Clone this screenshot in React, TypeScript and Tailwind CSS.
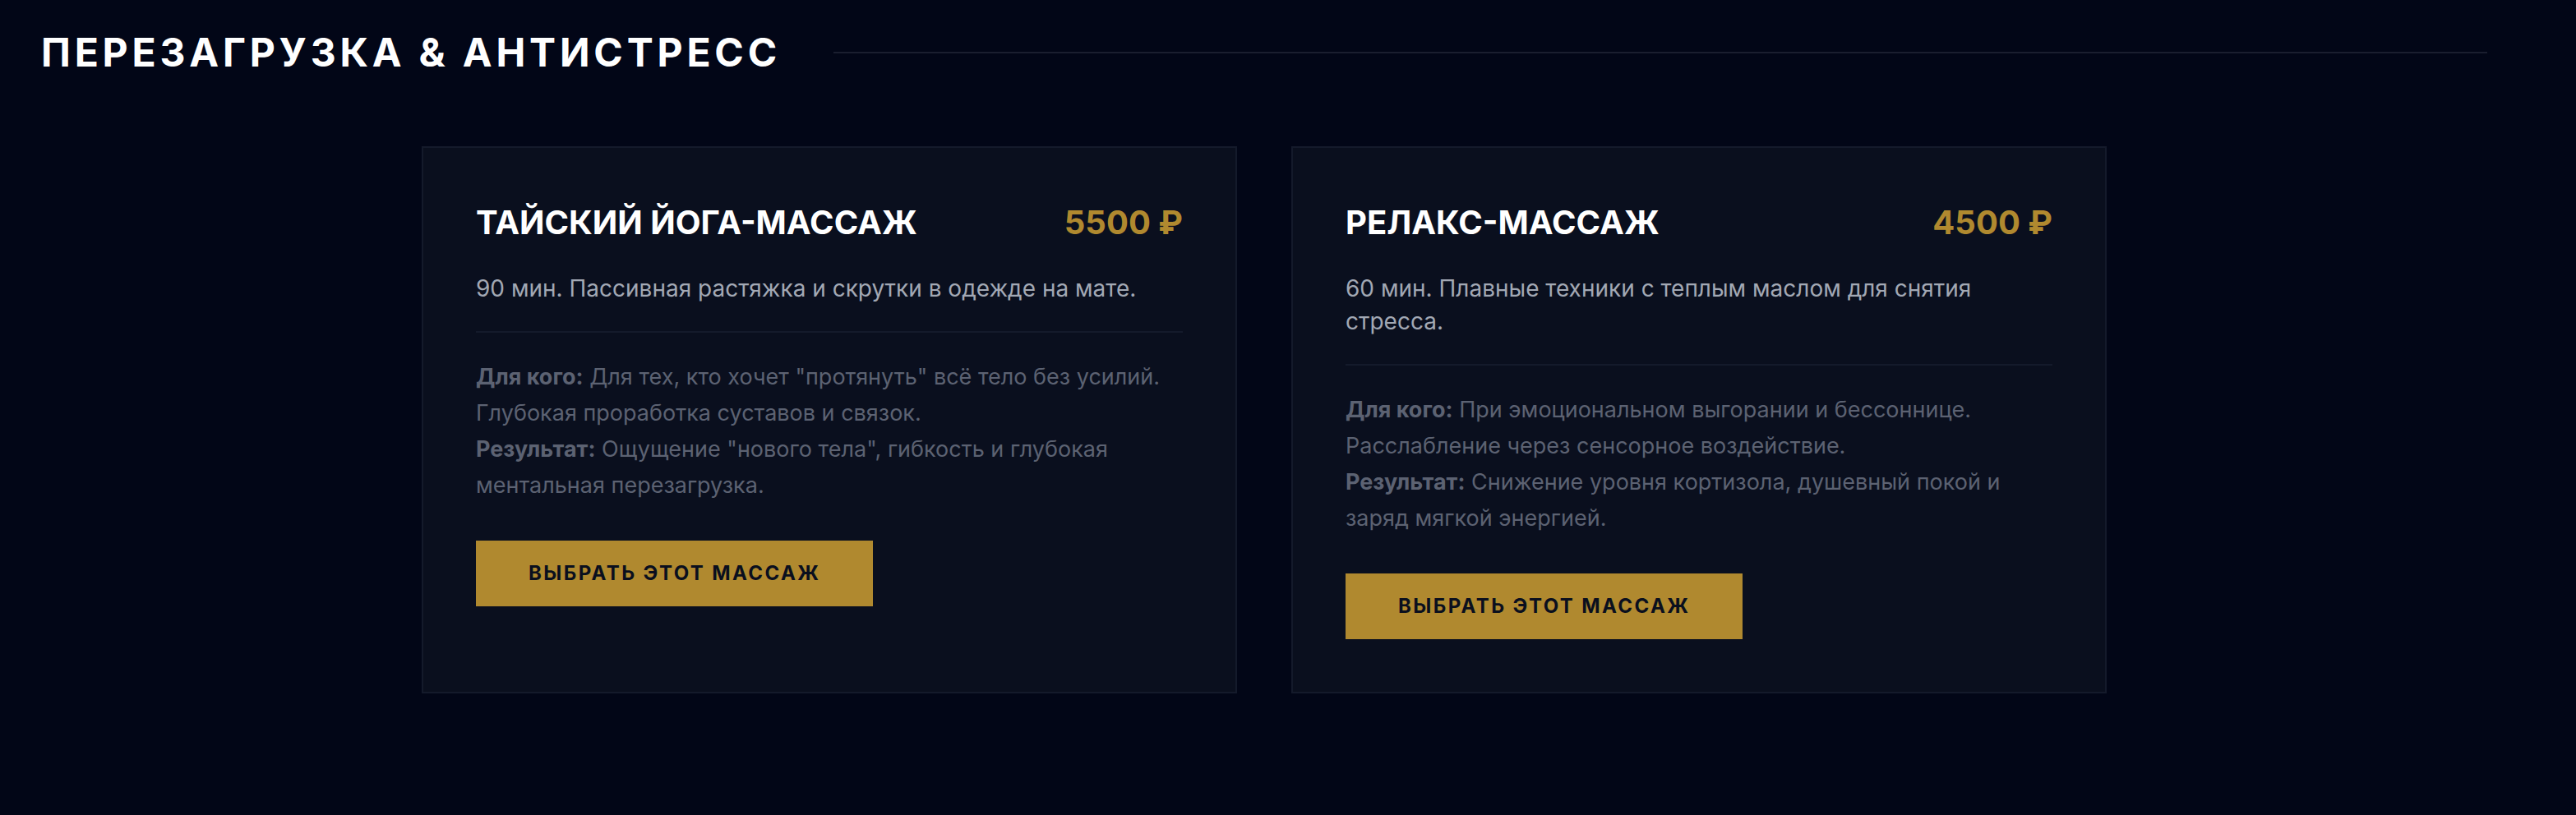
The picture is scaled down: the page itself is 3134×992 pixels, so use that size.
type Massage = {
  id: string;
  title: string;
  price: string;
  description: string;
  forWhom: string;
  result: string;
};

const massages: Massage[] = [
  {
    id: "thai-yoga",
    title: "Тайский йога-массаж",
    price: "5500 ₽",
    description: "90 мин. Пассивная растяжка и скрутки в одежде на мате.",
    forWhom:
      'Для тех, кто хочет "протянуть" всё тело без усилий. Глубокая проработка суставов и связок.',
    result: 'Ощущение "нового тела", гибкость и глубокая ментальная перезагрузка.',
  },
  {
    id: "relax",
    title: "Релакс-массаж",
    price: "4500 ₽",
    description: "60 мин. Плавные техники с теплым маслом для снятия стресса.",
    forWhom:
      "При эмоциональном выгорании и бессоннице. Расслабление через сенсорное воздействие.",
    result: "Снижение уровня кортизола, душевный покой и заряд мягкой энергией.",
  },
];

function MassageCard({ massage }: { massage: Massage }) {
  return (
    <div className="flex flex-col border-2 border-[#141a2b] bg-[#0a0f1e] px-16 pb-16 pt-[67px]">
      <div className="flex items-baseline justify-between gap-8">
        <h3 className="text-[40px] font-bold uppercase leading-[48px] text-white">
          {massage.title}
        </h3>
        <span className="text-[40px] font-bold leading-[48px] text-[#b0892f]">
          {massage.price}
        </span>
      </div>

      <p className="mt-9 border-b-2 border-[#141a2b] pb-8 text-[28px] leading-[40px] text-[#a2a8b4]">
        {massage.description}
      </p>

      <div className="pt-8 text-[27px] leading-[44px] text-[#5c6272]">
        <p>
          <span className="font-bold">Для кого:</span> {massage.forWhom}
        </p>
        <p>
          <span className="font-bold">Результат:</span> {massage.result}
        </p>
      </div>

      <div className="mt-[45px]">
        <button className="bg-[#b0892f] px-16 py-[26px] text-[24px] font-bold uppercase leading-[28px] tracking-[0.1em] text-[#0a0f1e]">
          Выбрать этот массаж
        </button>
      </div>
    </div>
  );
}

export default function App() {
  return (
    <div
      className="min-h-[992px] bg-[#020617] pb-20 pl-[50px] pr-[108px] pt-[35px]"
      style={{ fontFamily: "Inter, 'Noto Sans', sans-serif" }}
    >
      <div className="flex items-center gap-16">
        <h2 className="whitespace-nowrap text-[48px] font-bold uppercase leading-[58px] tracking-[0.1em] text-white">
          Перезагрузка &amp; Антистресс
        </h2>
        <div className="h-[2px] flex-1 bg-[#1a1e2f]" />
      </div>

      <div className="mx-auto mt-[85px] grid w-[2050px] grid-cols-2 gap-[66px]">
        {massages.map((m) => (
          <MassageCard key={m.id} massage={m} />
        ))}
      </div>
    </div>
  );
}
